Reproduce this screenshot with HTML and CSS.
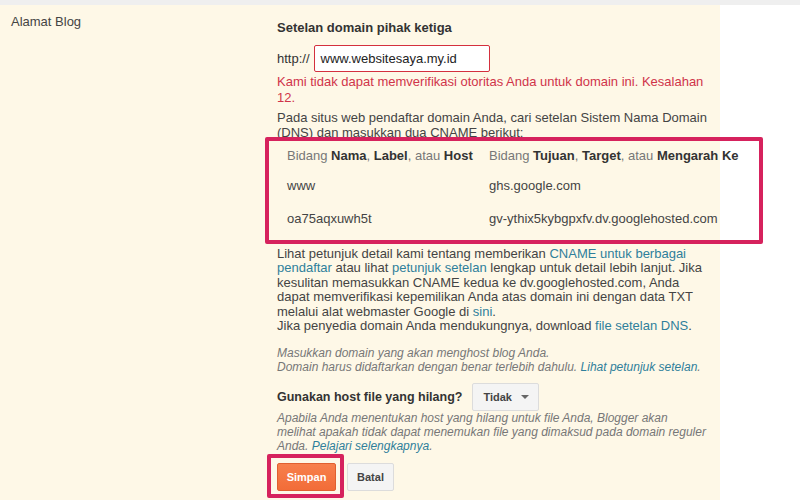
FILE: index.html
```html
<!DOCTYPE html>
<html lang="id">
<head>
<meta charset="utf-8">
<title>Alamat Blog</title>
<link rel="stylesheet" href="styles.css">
</head>
<body>
<div class="topbar"></div>
<div class="page">
  <div class="panel">
    <div class="label">Alamat Blog</div>
    <div class="content">
      <div class="heading">Setelan domain pihak ketiga</div>
      <div class="url-row">
        <span class="proto">http://</span>
        <div class="input">www.websitesaya.my.id</div>
      </div>
      <p class="error">Kami tidak dapat memverifikasi otoritas Anda untuk domain ini. Kesalahan<br>12.</p>
      <p class="intro">Pada situs web pendaftar domain Anda, cari setelan Sistem Nama Domain<br>(DNS) dan masukkan dua CNAME berikut:</p>
      <div class="cname-wrap">
        <div class="cname">
          <div class="cell head r1">Bidang <b>Nama</b>, <b>Label</b>, atau <b>Host</b></div>
          <div class="cell head r1">Bidang <b>Tujuan</b>, <b>Target</b>, atau <b>Mengarah Ke</b></div>
          <div class="cell r2">www</div>
          <div class="cell r2">ghs.google.com</div>
          <div class="cell r3">oa75aqxuwh5t</div>
          <div class="cell r3">gv-ythix5kybgpxfv.dv.googlehosted.com</div>
        </div>
        <div class="mark mark-table"></div>
      </div>
      <p class="help">Lihat petunjuk detail kami tentang memberikan <a href="#">CNAME untuk berbagai<br>pendaftar</a> atau lihat <a href="#">petunjuk setelan</a> lengkap untuk detail lebih lanjut. Jika<br>kesulitan memasukkan CNAME kedua ke dv.googlehosted.com, Anda<br>dapat memverifikasi kepemilikan Anda atas domain ini dengan data TXT<br>melalui alat webmaster Google di <a href="#">sini</a>.<br>Jika penyedia domain Anda mendukungnya, download <a href="#">file setelan DNS</a>.</p>
      <p class="hint first">Masukkan domain yang akan menghost blog Anda.<br>Domain harus didaftarkan dengan benar terlebih dahulu. <a href="#">Lihat petunjuk setelan</a>.</p>
      <div class="missing-row">
        <span class="missing-label">Gunakan host file yang hilang?</span>
        <div class="select">Tidak <span class="caret"></span></div>
      </div>
      <p class="hint">Apabila Anda menentukan host yang hilang untuk file Anda, Blogger akan<br>melihat apakah tidak dapat menemukan file yang dimaksud pada domain reguler<br>Anda. <a href="#">Pelajari selengkapnya</a>.</p>
      <div class="actions">
        <div class="save-wrap">
          <button class="btn btn-save">Simpan</button>
          <div class="mark mark-save"></div>
        </div>
        <button class="btn btn-cancel">Batal</button>
      </div>
    </div>
  </div>
</div>
</body>
</html>
```

FILE: styles.css
```css
html, body {
  margin: 0;
  padding: 0;
  background: #ffffff;
}
body {
  font-family: "Liberation Sans", Arial, sans-serif;
  font-size: 13px;
  color: #444;
  width: 800px;
  height: 500px;
  overflow: hidden;
}
.topbar {
  height: 5px;
  background: #efefef;
}
.page {
  display: flex;
}
.panel {
  width: 720px;
  height: 495px;
  background: #fef8e7;
  display: flex;
}
.label {
  width: 277px;
  flex: none;
  padding: 9px 0 0 11px;
  box-sizing: border-box;
  line-height: 15px;
  color: #444;
}
.content {
  flex: 1;
  padding-top: 15px;
  min-width: 0;
}
.heading {
  font-weight: bold;
  color: #333;
  line-height: 15px;
  margin-bottom: 10px;
}
.url-row {
  display: flex;
  align-items: center;
  gap: 4px;
}
.proto {
  color: #333;
}
.input {
  width: 176px;
  height: 27px;
  box-sizing: border-box;
  border: 1px solid #d4303e;
  border-radius: 2px;
  background: #fff;
  padding: 0 6px;
  line-height: 25px;
  font-size: 13px;
  color: #222;
}
p {
  margin: 0;
}
.error {
  color: #d0344a;
  line-height: 16px;
  margin-top: 2px;
}
.intro {
  margin-top: 4px;
  line-height: 15px;
}
.cname-wrap {
  position: relative;
  margin-top: -3px;
  padding: 4px 0 8px;
  white-space: nowrap;
}
.cname {
  display: grid;
  grid-template-columns: 202px auto;
}
.cell {
  padding: 0 10px;
  color: #444;
}
.r1 { height: 29px; line-height: 29px; }
.r2 { height: 31px; line-height: 31px; }
.r3 { height: 35px; line-height: 35px; }
.cell.head {
  color: #777;
}
.cell.head b {
  color: #333;
}
.mark {
  position: absolute;
  border: 4px solid #d6225d;
  border-radius: 2px;
  box-sizing: border-box;
}
.mark-table {
  left: -12px;
  top: 0;
  width: 498px;
  height: 107px;
}
.help {
  margin-top: 3px;
  line-height: 14.4px;
  white-space: nowrap;
}
a {
  color: #2f7f9b;
  text-decoration: none;
}
.hint {
  font-style: italic;
  color: #777;
  font-size: 12px;
  line-height: 14px;
  white-space: nowrap;
}
.hint.first {
  margin-top: 13px;
}
.missing-row {
  display: flex;
  align-items: center;
  gap: 10px;
  margin-top: 9px;
  margin-bottom: 0;
}
.missing-label {
  font-weight: bold;
  font-size: 12.5px;
  color: #333;
}
.select {
  display: flex;
  align-items: center;
  gap: 9px;
  height: 28px;
  box-sizing: border-box;
  padding: 0 9px 0 10px;
  background: #f4f4f4;
  border: 1px solid #dcdcdc;
  border-radius: 2px;
  font-size: 11px;
  font-weight: bold;
  color: #444;
}
.caret {
  width: 0;
  height: 0;
  border-left: 4px solid transparent;
  border-right: 4px solid transparent;
  border-top: 4px solid #666;
}
.actions {
  display: flex;
  gap: 11px;
  margin-top: 10px;
}
.save-wrap {
  position: relative;
}
.btn {
  display: block;
  height: 28px;
  box-sizing: border-box;
  border-radius: 2px;
  font-family: "Liberation Sans", Arial, sans-serif;
  font-size: 11px;
  font-weight: bold;
  padding: 0;
  margin: 0;
  cursor: pointer;
}
.btn-save {
  width: 59px;
  background: linear-gradient(#f7804c, #f26c38);
  border: 1px solid #e0602f;
  color: #fff;
}
.btn-cancel {
  width: 47px;
  background: #f4f4f4;
  border: 1px solid #dcdcdc;
  color: #444;
}
.mark-save {
  left: -10px;
  top: -9px;
  width: 77px;
  height: 44px;
}
```
